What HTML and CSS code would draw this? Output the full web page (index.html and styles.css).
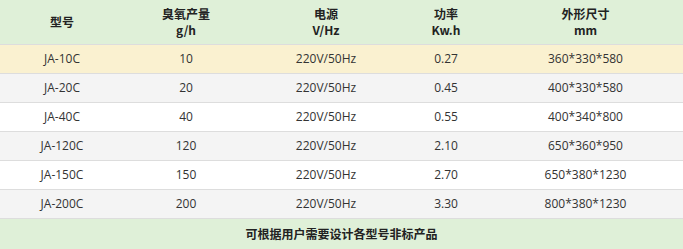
FILE: index.html
```html
<!DOCTYPE html>
<html lang="zh-CN">
<head>
<meta charset="utf-8">
<title>臭氧发生器参数</title>
<link rel="stylesheet" href="styles.css">
</head>
<body>
<table class="spec">
  <colgroup>
    <col class="c1"><col class="c2"><col class="c3"><col class="c4"><col class="c5">
  </colgroup>
  <thead>
    <tr class="head">
      <th>型号</th>
      <th>臭氧产量<br>g/h</th>
      <th>电源<br>V/Hz</th>
      <th>功率<br>Kw.h</th>
      <th>外形尺寸<br>mm</th>
    </tr>
  </thead>
  <tbody>
    <tr class="warn"><td>JA-10C</td><td>10</td><td>220V/50Hz</td><td>0.27</td><td>360*330*580</td></tr>
    <tr class="alt"><td>JA-20C</td><td>20</td><td>220V/50Hz</td><td>0.45</td><td>400*330*580</td></tr>
    <tr><td>JA-40C</td><td>40</td><td>220V/50Hz</td><td>0.55</td><td>400*340*800</td></tr>
    <tr class="alt"><td>JA-120C</td><td>120</td><td>220V/50Hz</td><td>2.10</td><td>650*360*950</td></tr>
    <tr><td>JA-150C</td><td>150</td><td>220V/50Hz</td><td>2.70</td><td>650*380*1230</td></tr>
    <tr class="alt"><td>JA-200C</td><td>200</td><td>220V/50Hz</td><td>3.30</td><td>800*380*1230</td></tr>
  </tbody>
  <tfoot>
    <tr class="foot"><td colspan="5">可根据用户需要设计各型号非标产品</td></tr>
  </tfoot>
</table>
</body>
</html>
```

FILE: styles.css
```css
html, body {
  margin: 0;
  padding: 0;
  background: #ffffff;
}
body {
  font-family: "Open Sans", "Noto Sans CJK SC", sans-serif;
  font-size: 12px;
  color: #333333;
}
.spec {
  width: 683px;
  border-collapse: collapse;
  table-layout: fixed;
}
.c1 { width: 124px; }
.c2 { width: 124px; }
.c3 { width: 156px; }
.c4 { width: 84px; }
.c5 { width: 195px; }

.spec th,
.spec td {
  text-align: center;
  vertical-align: middle;
  padding: 0;
}
.head th {
  background: #dff0d8;
  height: 44px;
  font-family: "Noto Sans CJK SC", sans-serif;
  font-weight: bold;
  font-size: 12px;
  line-height: 16px;
  color: #222222;
  border-bottom: 1px solid #dddddd;
}
.spec tbody td {
  height: 28px;
  border-bottom: 1px solid #dddddd;
  line-height: 16px;
}
.warn td { background: #faf1d0; }
.alt td { background: #f4f4f4; }
.foot td {
  background: #dff0d8;
  height: 30px;
  font-family: "Noto Sans CJK SC", sans-serif;
  font-weight: bold;
  color: #222222;
  line-height: 16px;
}
```
